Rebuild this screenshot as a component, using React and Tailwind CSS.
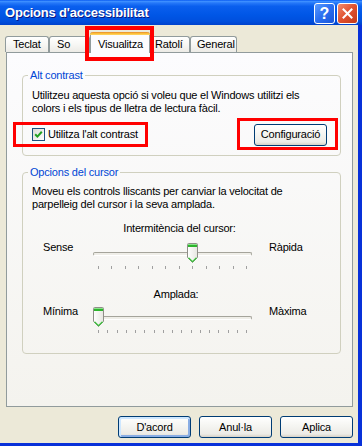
import React from "react";

function Thumb() {
  return (
    <svg width="11" height="21" viewBox="0 0 11 21" className="block">
      <defs>
        <linearGradient id="thumbg" x1="0" y1="0" x2="1" y2="0">
          <stop offset="0" stopColor="#FFFFFF" />
          <stop offset="1" stopColor="#E6E6E0" />
        </linearGradient>
      </defs>
      <path
        d="M1.5 0.5 H9.5 Q10.5 0.5 10.5 1.5 V14.5 L5.5 19.5 L0.5 14.5 V1.5 Q0.5 0.5 1.5 0.5 Z"
        fill="url(#thumbg)"
        stroke="#8F8F88"
      />
      <rect x="1" y="1" width="9" height="1" fill="#8BE58B" />
      <rect x="1" y="2" width="9" height="2" fill="#2DB52D" />
      <path d="M1.5 14.8 L5.5 18.6 L9.5 14.8" fill="none" stroke="#3BC13B" strokeWidth="1.2" />
    </svg>
  );
}

function Slider({ ticks, pos }) {
  const left = (pos / (ticks - 1)) * 148;
  return (
    <div className="relative w-[159px] mt-[2px] flex flex-col pt-[9px]">
      <div className="h-[4px] rounded-[2px] border border-[#A5A49B] border-b-white bg-[#EFEEE8]" />
      <div className="mt-[10px] px-[5px] flex justify-between">
        {Array.from({ length: ticks }).map((_, i) => (
          <div key={i} className="w-px h-[3px] bg-[#A0A0A0]" />
        ))}
      </div>
      <div className="absolute top-0" style={{ left }}>
        <Thumb />
      </div>
    </div>
  );
}

function XPButton({ children, def, className = "" }) {
  return (
    <div
      className={
        "h-[22px] w-[73px] rounded-[3px] border border-[#003C74] bg-[linear-gradient(180deg,#FFFFFF_0%,#F6F6F3_40%,#ECEBE6_85%,#D6D0C5_100%)] flex items-center justify-center " +
        (def ? "shadow-[inset_1px_1px_0_1px_#CEE7FF,inset_-1px_-1px_0_1px_#89ADE4] " : "") +
        className
      }
    >
      {children}
    </div>
  );
}

function Tab({ w, label, pl }) {
  return (
    <div
      className="h-[16px] mb-px border border-b-0 border-[#919B9C] rounded-t-[3px] bg-[linear-gradient(180deg,#FFFFFF_0%,#F7F7F4_50%,#ECEBE6_100%)] flex items-center"
      style={{ width: w, paddingLeft: pl }}
    >
      <span className="leading-[13px]">{label}</span>
    </div>
  );
}

export default function App() {
  return (
    <div className="relative w-[362px] h-[446px] flex flex-col bg-[#ECE9D8] overflow-hidden font-['Liberation_Sans',Arial,sans-serif] text-[11px] leading-[13px] tracking-[-0.2px] text-black">
      {/* Title bar */}
      <div className="h-[25px] flex items-center pl-[5px] pr-[4px] bg-[linear-gradient(180deg,#0A5CF2_0%,#3C8EFF_6%,#2578F9_12%,#0A5FEE_25%,#0056E6_60%,#004FDD_85%,#0042CC_100%)]">
        <div className="flex-1 text-white font-bold text-[13px] tracking-[-0.2px] [text-shadow:1px_1px_0_#0A1883]">
          Opcions d'accessibilitat
        </div>
        <div className="flex gap-[2px] pt-[1px]">
          <div className="w-[21px] h-[21px] rounded-[3px] border border-white bg-[linear-gradient(135deg,#5A9AFF_0%,#2A6EF0_50%,#1A55D8_100%)] flex items-center justify-center text-white font-bold text-[16px] tracking-normal">
            ?
          </div>
          <div className="w-[21px] h-[21px] rounded-[3px] border border-white bg-[linear-gradient(135deg,#F08C6E_0%,#E0502E_50%,#C23A1A_100%)] flex items-center justify-center">
            <svg width="11" height="11" viewBox="0 0 11 11">
              <path d="M1.5 1.5 L9.5 9.5 M9.5 1.5 L1.5 9.5" stroke="white" strokeWidth="2" strokeLinecap="square" />
            </svg>
          </div>
        </div>
      </div>

      {/* Body */}
      <div className="flex-1 flex flex-col border-r-[4px] border-b-[3px] border-[#0831D9] pt-[7px] pl-[6px] pr-[5px]">
        {/* Tabs */}
        <div className="relative z-10 flex items-end h-[21px] -mb-px ml-[-1px]">
          <Tab w={44} label="Teclat" pl={7} />
          <Tab w={41} label="So" pl={7} />
          <div className="h-[21px] w-[60px] border-x border-[#919B9C] rounded-t-[3px] bg-[#FCFCFE] flex flex-col">
            <div className="h-[3px] rounded-t-[3px] bg-[linear-gradient(180deg,#E68B2C_0%,#FFC73C_60%,#FFD66B_100%)] -mx-px" />
            <div className="pl-[7px] pt-[3px] leading-[13px]">Visualitza</div>
          </div>
          <Tab w={40} label="Ratolí" pl={4} />
          <Tab w={47} label="General" pl={6} />
        </div>

        {/* Panel */}
        <div className="w-[347px] h-[355px] border border-[#919B9C] bg-linear-to-b from-[#FCFCFE] to-[#F4F3EE] flex flex-col">
          <fieldset className="ml-[15px] mt-[16px] w-[319px] border border-[#D0D0BF] rounded-[4px] pl-[9px] pr-[13px] pt-[7px] pb-[10px]">
            <legend className="ml-[-4px] px-[2px] text-[#0046D5] leading-[13px]">Alt contrast</legend>
            <div className="whitespace-nowrap">
              Utilitzeu aquesta opció si voleu que el Windows utilitzi els
              <br />
              colors i els tipus de lletra de lectura fàcil.
            </div>
            <div className="mt-[9px] flex items-center justify-between h-[21px]">
              <div className="flex items-center gap-[3px]">
                <div className="w-[13px] h-[13px] border border-[#1C5180] bg-linear-to-br from-[#DCDCD7] to-white flex items-center justify-center">
                  <svg width="11" height="11" viewBox="0 0 11 11">
                    <path d="M2.2 5.2 L4.4 7.6 L8.8 2.8" fill="none" stroke="#21A121" strokeWidth="2" />
                  </svg>
                </div>
                <span>Utilitza l'alt contrast</span>
              </div>
              <XPButton className="h-[21px]">Configuració</XPButton>
            </div>
          </fieldset>

          <fieldset className="ml-[15px] mt-[10px] w-[319px] border border-[#D0D0BF] rounded-[4px] pl-[9px] pr-[13px] pt-[6px] pb-[20px]">
            <legend className="ml-[-4px] px-[2px] text-[#0046D5] leading-[13px]">Opcions del cursor</legend>
            <div className="whitespace-nowrap">
              Moveu els controls lliscants per canviar la velocitat de
              <br />
              parpelleig del cursor i la seva amplada.
            </div>
            <div className="mt-[11px] text-center">Intermitència del cursor:</div>
            <div className="mt-[6px] flex items-start">
              <div className="w-[61px] pl-[11px]">Sense</div>
              <Slider ticks={12} pos={7} />
              <div className="ml-[17px]">Ràpida</div>
            </div>
            <div className="mt-[19px] text-center pr-[7px]">Amplada:</div>
            <div className="mt-[4px] flex items-start">
              <div className="w-[61px] pl-[11px]">Mínima</div>
              <Slider ticks={17} pos={0} />
              <div className="ml-[17px]">Màxima</div>
            </div>
          </fieldset>
        </div>

        {/* Buttons */}
        <div className="mt-[9px] flex justify-end gap-[8px]">
          <XPButton def>D'acord</XPButton>
          <XPButton>Anul·la</XPButton>
          <XPButton>Aplica</XPButton>
        </div>
      </div>

      {/* Red annotation boxes */}
      <div className="absolute left-[85px] top-[26px] w-[69px] h-[35px] border-[4px] border-[#FF0000] z-20" />
      <div className="absolute left-[13px] top-[122px] w-[135px] h-[25px] border-[3px] border-[#FF0000] z-20" />
      <div className="absolute left-[237px] top-[118px] w-[101px] h-[32px] border-[3px] border-[#FF0000] z-20" />
    </div>
  );
}
